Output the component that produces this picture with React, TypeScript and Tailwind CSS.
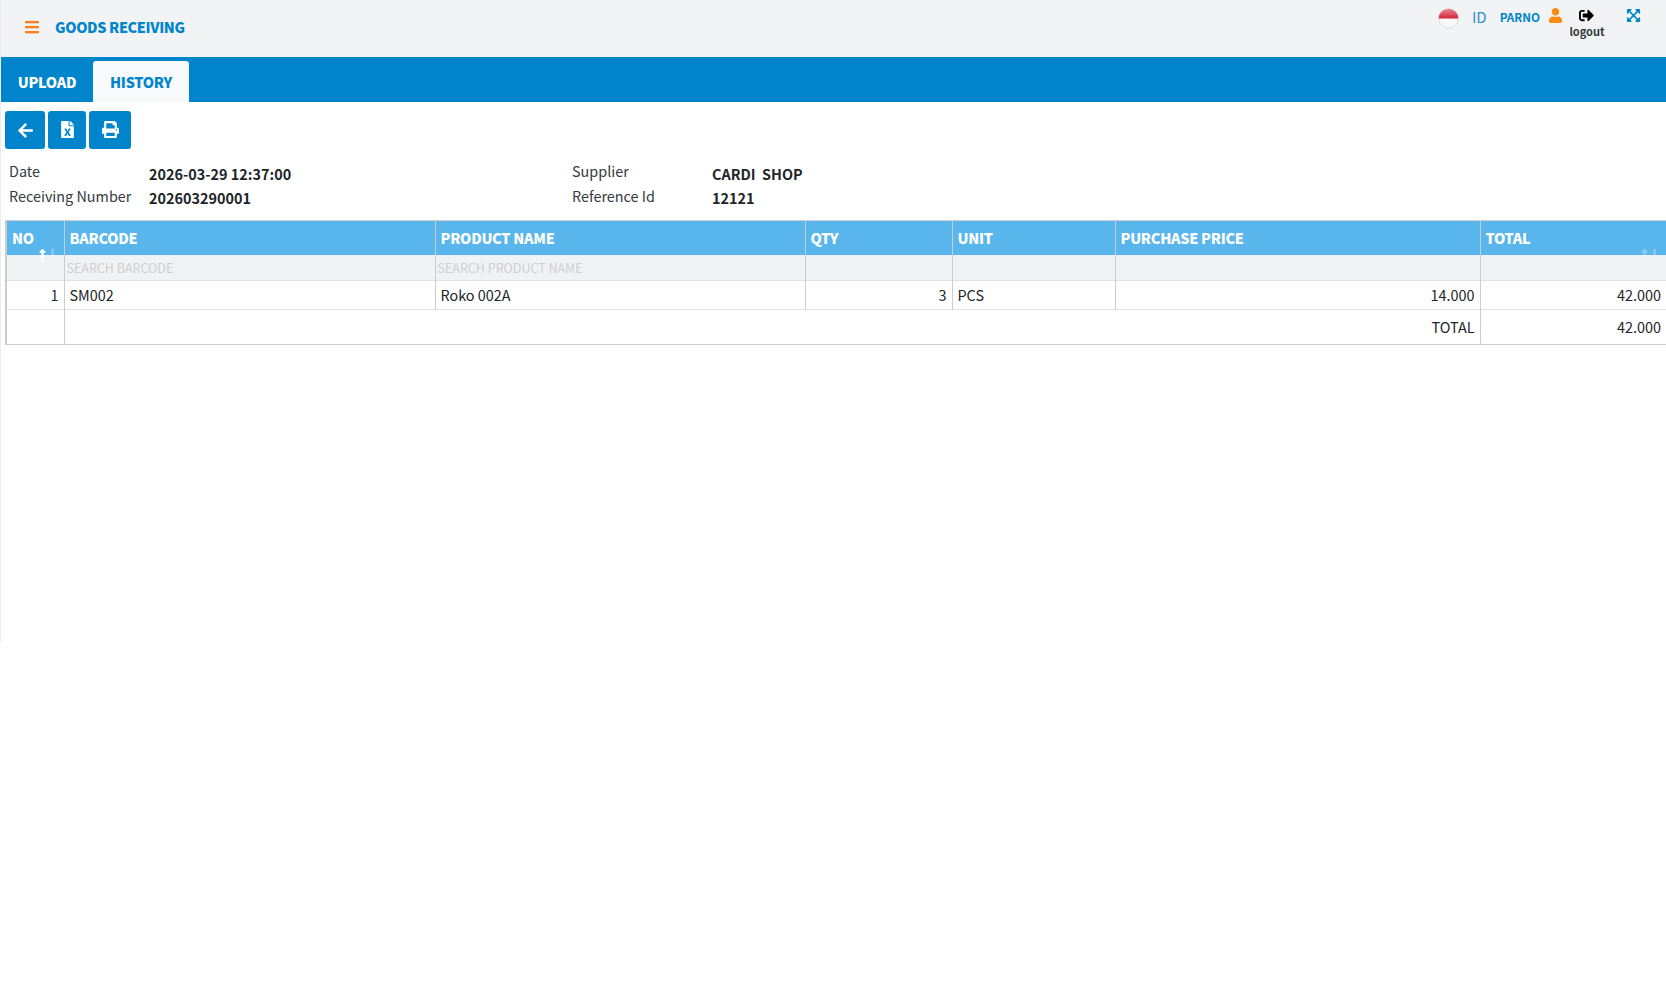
import { FaArrowLeft, FaBars, FaExpandArrowsAlt, FaFileExcel, FaPrint, FaSignOutAlt, FaUser, FaLongArrowAltDown, FaLongArrowAltUp } from "react-icons/fa";

const headCell = "border-l border-[#c9ccd0] px-[5px] text-left align-middle font-black tracking-[-0.25px] text-white";
const searchCell = "border-l border-[#c9ccd0] bg-[#f1f2f4] px-[2px] pt-[2px] text-[12.5px] text-[#cfcfcf]";
const bodyCell = "border-l border-[#c9ccd0] px-[5px] text-[#212529]";

function SortArrows({ active }: { active?: boolean }) {
  return (
    <span className="absolute right-[4px] bottom-[-8px] flex text-[15px] text-white">
      <FaLongArrowAltUp className={active ? "-mr-[5px]" : "-mr-[5px] opacity-30"} />
      <FaLongArrowAltDown className="opacity-30" />
    </span>
  );
}

function Flag() {
  return (
    <svg width="21" height="21" viewBox="0 0 21 21">
      <defs>
        <linearGradient id="flagRed" x1="0" y1="0" x2="0" y2="1">
          <stop offset="0" stopColor="#e88b97" />
          <stop offset="1" stopColor="#d3233c" />
        </linearGradient>
      </defs>
      <circle cx="10.5" cy="10.5" r="9.8" fill="#f8f8f8" stroke="#dcdcdc" strokeWidth="1" />
      <path d="M0.7 10.5a9.8 9.8 0 0 1 19.6 0z" fill="url(#flagRed)" />
    </svg>
  );
}

function InfoRow({ label, value, valueTop }: { label: string; value: string; valueTop: string }) {
  return (
    <div className="flex h-[25px]">
      <div className="w-[140px] text-[14.4px] leading-[24px] text-[#343a40]">{label}</div>
      <div className={`${valueTop} text-[14.4px] leading-[22px] font-bold whitespace-pre text-[#212529]`}>{value}</div>
    </div>
  );
}

export default function App() {
  return (
    <div className="flex h-[992px] w-[1666px] overflow-hidden bg-white font-['Noto_Sans_CJK_SC','Source_Sans_Pro',sans-serif] text-[14.4px]">
      <div className="h-[642px] w-px shrink-0 bg-[#ececec]" />
      <div className="min-w-0 flex-1">
        <header className="flex h-[57px] bg-[#f1f3f5]">
          <div className="flex h-full items-center pb-[3px] pl-[23px]">
            <FaBars className="text-[16px] text-[#fd7e14]" />
            <span className="ml-[15px] text-[14.4px] font-black tracking-[-0.35px] text-[#0085cc]">GOODS RECEIVING</span>
          </div>
          <div className="ml-auto flex items-start pt-[8px] pr-[25px]">
            <Flag />
            <span className="mt-[-2px] ml-[13px] text-[15px] leading-[22px] text-[#2f8fd0]">ID</span>
            <span className="mt-[-1px] ml-[13px] text-[11.7px] leading-[20px] font-bold text-[#0085cc]">PARNO</span>
            <FaUser className="ml-[8px] text-[15px] text-[#fd8a14]" />
            <div className="ml-[6px] flex w-[36px] flex-col items-center">
              <FaSignOutAlt className="-ml-[2px] text-[15px] text-black" />
              <span className="text-[11px] leading-[16px] font-bold text-[#343a40]">logout</span>
            </div>
            <FaExpandArrowsAlt className="ml-[21px] text-[15px] text-[#0085cc]" />
          </div>
        </header>

        <div className="flex h-[45px] items-end bg-[#0085cc]">
          <div className="flex h-[41px] w-[92px] items-center justify-center pt-[1px] text-[14.4px] font-black tracking-[-0.25px] text-white">UPLOAD</div>
          <div className="flex h-[41px] w-[96px] items-center justify-center rounded-t-[3px] bg-[#f8f9fa] pt-[1px] text-[14.4px] font-black tracking-[-0.25px] text-[#0085cc]">HISTORY</div>
        </div>

        <div className="flex gap-[3px] pt-[9px] pl-[4px]">
          <button className="flex h-[38px] w-[40px] items-center justify-center rounded-[3px] bg-[#0085cc] text-[17px] text-white">
            <FaArrowLeft />
          </button>
          <button className="flex h-[38px] w-[38px] items-center justify-center rounded-[3px] bg-[#0085cc] pb-[1px] text-[17px] text-white">
            <FaFileExcel />
          </button>
          <button className="flex h-[38px] w-[42px] items-center justify-center rounded-[3px] bg-[#0085cc] pb-[1px] text-[17px] text-white">
            <FaPrint />
          </button>
        </div>

        <div className="flex pt-[10px] pl-[8px]">
          <div className="w-[563px]">
            <InfoRow label="Date" value="2026-03-29 12:37:00" valueTop="pt-[4px]" />
            <InfoRow label="Receiving Number" value="202603290001" valueTop="pt-[3px]" />
          </div>
          <div>
            <InfoRow label="Supplier" value="CARDI  SHOP" valueTop="pt-[4px]" />
            <InfoRow label="Reference Id" value="12121" valueTop="pt-[3px]" />
          </div>
        </div>

        <div className="pt-[11px] pl-[4px]">
          <table className="w-[1660px] table-fixed border-collapse border-y border-l-2 border-[#c9ccd0] text-[14.4px]">
            <colgroup>
              <col className="w-[58px]" />
              <col className="w-[371px]" />
              <col className="w-[370px]" />
              <col className="w-[147px]" />
              <col className="w-[163px]" />
              <col className="w-[365px]" />
              <col className="w-[186px]" />
            </colgroup>
            <thead>
              <tr className="h-[34px] bg-[#58b6ec]">
                <th className={`relative ${headCell}`}>
                  NO
                  <SortArrows active />
                </th>
                <th className={headCell}>BARCODE</th>
                <th className={headCell}>PRODUCT NAME</th>
                <th className={headCell}>QTY</th>
                <th className={headCell}>UNIT</th>
                <th className={headCell}>PURCHASE PRICE</th>
                <th className={`relative ${headCell}`}>
                  TOTAL
                  <SortArrows />
                </th>
              </tr>
              <tr className="h-[26px] border-b border-[#dfe1e5]">
                <td className={searchCell} />
                <td className={searchCell}>SEARCH BARCODE</td>
                <td className={searchCell}>SEARCH PRODUCT NAME</td>
                <td className={searchCell} />
                <td className={searchCell} />
                <td className={searchCell} />
                <td className={searchCell} />
              </tr>
            </thead>
            <tbody>
              <tr className="h-[29px] border-b border-[#dfe1e5]">
                <td className={`${bodyCell} text-right`}>1</td>
                <td className={bodyCell}>SM002</td>
                <td className={bodyCell}>Roko 002A</td>
                <td className={`${bodyCell} text-right`}>3</td>
                <td className={bodyCell}>PCS</td>
                <td className={`${bodyCell} text-right`}>14.000</td>
                <td className={`${bodyCell} text-right`}>42.000</td>
              </tr>
              <tr className="h-[35px]">
                <td className={bodyCell} />
                <td colSpan={5} className={`${bodyCell} text-right`}>TOTAL</td>
                <td className={`${bodyCell} text-right`}>42.000</td>
              </tr>
            </tbody>
          </table>
        </div>
      </div>
    </div>
  );
}
